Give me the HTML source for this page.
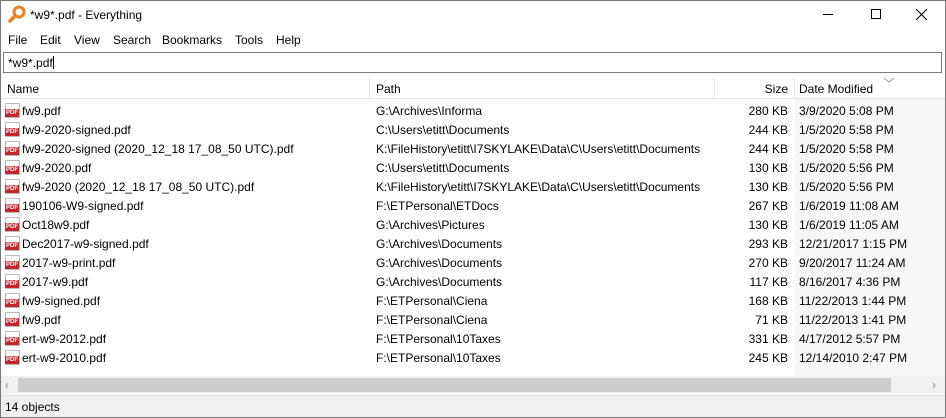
<!DOCTYPE html>
<html><head><style>
*{margin:0;padding:0;box-sizing:border-box}
body{width:946px;height:418px;background:#fff;font-family:"Liberation Sans",sans-serif;font-size:12px;color:#000;position:relative;overflow:hidden}
.abs{position:absolute}
.title{top:0;left:0;width:946px;height:31px}
.menu span{position:absolute;top:33px;font-size:12px}
.search{left:3px;top:52px;width:939px;height:21px;border:1px solid #7a7a7a;padding:3px 4px;font-size:12px}
.hdr{top:78px;left:0;width:946px;height:21px;border-bottom:1px solid #e5e5e5}
.hdr span{position:absolute;top:4px}
.sep{position:absolute;top:0;width:1px;height:21px;background:#e5e5e5}
.datebg{left:795px;top:99px;width:150px;height:277px;background:#f7f7f7}
.row{position:absolute;left:0;width:946px;height:19px}
.row span{position:absolute;top:3px;white-space:nowrap}
.ic{position:absolute;left:5px;top:2px;width:15px;height:15px;background:#fff;border:1px solid #bbb}
.ic i{position:absolute;left:-1px;top:5px;width:14px;height:8px;background:#c1272d;color:#fff;font-style:normal;font-size:6px;line-height:8px;text-align:center;font-weight:bold}
.sz{right:158px;text-align:right}
</style></head><body>
<div class="abs title">
<svg class="abs" style="left:8px;top:5px" width="18" height="18" viewBox="0 0 18 18"><circle cx="11" cy="7" r="5" fill="none" stroke="#e8811e" stroke-width="3"/><line x1="7" y1="11" x2="2" y2="16" stroke="#e8811e" stroke-width="3.5" stroke-linecap="round"/></svg>
<span class="abs" style="left:30px;top:8px;font-size:12px">*w9*.pdf - Everything</span>
<span class="abs" style="left:823px;top:14px;width:10px;height:1px;background:#000"></span>
<span class="abs" style="left:871px;top:9px;width:10px;height:10px;border:1px solid #000"></span>
<svg class="abs" style="left:916px;top:9px" width="11" height="11"><path d="M0 0L11 11M11 0L0 11" stroke="#000" stroke-width="1"/></svg>
</div>
<div class="menu"><span style="left:8px">File</span><span style="left:40px">Edit</span><span style="left:74px">View</span><span style="left:113px">Search</span><span style="left:162px">Bookmarks</span><span style="left:235px">Tools</span><span style="left:276px">Help</span></div>
<div class="abs search">*w9*.pdf<span style="display:inline-block;width:1px;height:13px;background:#000;vertical-align:-2px"></span></div>
<div class="abs hdr">
<span style="left:7px">Name</span><div class="sep" style="left:369px"></div>
<span style="left:376px">Path</span><div class="sep" style="left:714px"></div>
<span style="right:158px">Size</span><div class="sep" style="left:794px"></div>
<span style="left:799px">Date Modified</span>
<svg class="abs" style="left:884px;top:0" width="10" height="5"><path d="M0 0L5 4L10 0" fill="none" stroke="#999"/></svg>
</div>
<div class="abs datebg"></div>
<div id="rows"></div>
<div class="abs" style="left:0;top:376px;width:946px;height:18px;background:#f0f0f0"></div>
<div class="abs" style="left:18px;top:378px;width:873px;height:14px;background:#cdcdcd"></div>
<span class="abs" style="left:5px;top:378px;color:#888">‹</span>
<span class="abs" style="left:932px;top:378px;color:#888">›</span>
<div class="abs" style="left:0;top:395px;width:946px;height:23px;background:#f0f0f0;border-top:1px solid #dcdcdc"></div>
<span class="abs" style="left:5px;top:400px">14 objects</span>
<div class="abs" style="left:0;top:0;width:946px;height:418px;border:1px solid #777"></div>
<script>
var d=[["fw9.pdf","G:\\Archives\\Informa","280 KB","3/9/2020 5:08 PM"],["fw9-2020-signed.pdf","C:\\Users\\etitt\\Documents","244 KB","1/5/2020 5:58 PM"],["fw9-2020-signed (2020_12_18 17_08_50 UTC).pdf","K:\\FileHistory\\etitt\\I7SKYLAKE\\Data\\C\\Users\\etitt\\Documents","244 KB","1/5/2020 5:58 PM"],["fw9-2020.pdf","C:\\Users\\etitt\\Documents","130 KB","1/5/2020 5:56 PM"],["fw9-2020 (2020_12_18 17_08_50 UTC).pdf","K:\\FileHistory\\etitt\\I7SKYLAKE\\Data\\C\\Users\\etitt\\Documents","130 KB","1/5/2020 5:56 PM"],["190106-W9-signed.pdf","F:\\ETPersonal\\ETDocs","267 KB","1/6/2019 11:08 AM"],["Oct18w9.pdf","G:\\Archives\\Pictures","130 KB","1/6/2019 11:05 AM"],["Dec2017-w9-signed.pdf","G:\\Archives\\Documents","293 KB","12/21/2017 1:15 PM"],["2017-w9-print.pdf","G:\\Archives\\Documents","270 KB","9/20/2017 11:24 AM"],["2017-w9.pdf","G:\\Archives\\Documents","117 KB","8/16/2017 4:36 PM"],["fw9-signed.pdf","F:\\ETPersonal\\Ciena","168 KB","11/22/2013 1:44 PM"],["fw9.pdf","F:\\ETPersonal\\Ciena","71 KB","11/22/2013 1:41 PM"],["ert-w9-2012.pdf","F:\\ETPersonal\\10Taxes","331 KB","4/17/2012 5:57 PM"],["ert-w9-2010.pdf","F:\\ETPersonal\\10Taxes","245 KB","12/14/2010 2:47 PM"]];
var h="";d.forEach(function(r,i){h+='<div class="row" style="top:'+(101+i*19)+'px"><div class="ic"><i>PDF</i></div><span style="left:22px">'+r[0]+'</span><span style="left:376px">'+r[1]+'</span><span class="sz">'+r[2]+'</span><span style="left:799px">'+r[3]+'</span></div>'});
document.getElementById("rows").innerHTML=h;
</script>
</body></html>
